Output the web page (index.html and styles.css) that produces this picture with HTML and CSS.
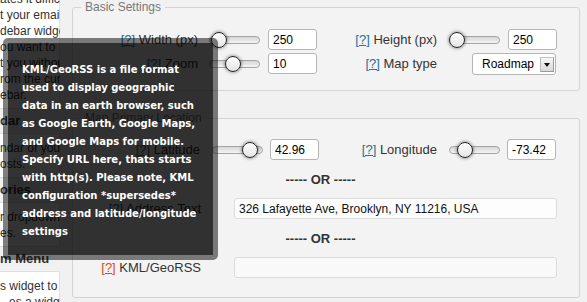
FILE: index.html
```html
<!DOCTYPE html>
<html>
<head>
    <link rel="stylesheet" href="styles.css">
</head>
<body>
    <div class="page">
        <div class="sidebar">
            <div class="widget-desc first">
                <p>ates it difficult to</p>
                <p>t your email</p>
                <p>debar widgets</p>
                <p>ou want to</p>
                <p>t you without</p>
                <p>rom the current</p>
                <p>ebar.</p>
            </div>
            <div class="widget-title">dar</div>
            <div class="widget-desc">
                <p>ndar of your</p>
                <p>osts.</p>
            </div>
            <div class="widget-title">ories</div>
            <div class="widget-desc">
                <p>r dropdown of</p>
                <p>es.</p>
            </div>
            <div class="widget-title">m Menu</div>
            <div class="widget-desc">
                <p>s widget to</p>
                <p class="indent">es a widget</p>
            </div>
        </div>

        <div class="main">
            <fieldset class="box basic">
                <legend>Basic Settings</legend>
                <div class="row">
                    <label class="lbl"><a href="#" class="help">[?]</a> Width (px)</label>
                    <div class="slider"><span class="knob" style="left: 1px"></span></div>
                    <input type="text" class="num" value="250">
                    <label class="lbl lbl-2"><a href="#" class="help">[?]</a> Height (px)</label>
                    <div class="slider"><span class="knob" style="left: -1px"></span></div>
                    <input type="text" class="num" value="250">
                </div>
                <div class="row">
                    <label class="lbl"><a href="#" class="help">[?]</a> Zoom</label>
                    <div class="slider"><span class="knob" style="left: 15px"></span></div>
                    <input type="text" class="num" value="10">
                    <label class="lbl lbl-2"><a href="#" class="help">[?]</a> Map type</label>
                    <div class="select-wrap">
                        <select class="maptype">
                            <option>Roadmap</option>
                            <option>Satellite</option>
                            <option>Hybrid</option>
                            <option>Terrain</option>
                        </select>
                        <span class="select-arrow"></span>
                    </div>
                </div>
            </fieldset>

            <fieldset class="box location">
                <legend>Map Primary Location</legend>
                <div class="row">
                    <label class="lbl"><a href="#" class="help">[?]</a> Latitude</label>
                    <div class="slider"><span class="knob" style="left: 29px"></span></div>
                    <input type="text" class="num" value="42.96">
                    <label class="lbl lbl-2"><a href="#" class="help">[?]</a> Longitude</label>
                    <div class="slider"><span class="knob" style="left: 7px"></span></div>
                    <input type="text" class="num" value="-73.42">
                </div>
                <div class="or">----- OR -----</div>
                <div class="row">
                    <label class="lbl wide"><a href="#" class="help">[?]</a> Address Text</label>
                    <input type="text" class="long" value="326 Lafayette Ave, Brooklyn, NY 11216, USA">
                </div>
                <div class="or">----- OR -----</div>
                <div class="row">
                    <label class="lbl wide"><a href="#" class="help active">[?]</a> KML/GeoRSS</label>
                    <input type="text" class="long empty" value="">
                </div>
            </fieldset>
        </div>

        <div class="tooltip">
            KML/GeoRSS is a file format<br>
            used to display geographic<br>
            data in an earth browser, such<br>
            as Google Earth, Google Maps,<br>
            and Google Maps for mobile.<br>
            Specify URL here, thats starts<br>
            with http(s). Please note, KML<br>
            configuration *supersedes*<br>
            address and latitude/longitude<br>
            settings
        </div>
    </div>
</body>
</html>
```

FILE: styles.css
```css
body {
    margin: 0;
    background: #f1f1f1;
    font-family: "Liberation Sans", Arial, sans-serif;
    color: #333;
}
.page {
    position: relative;
    display: flex;
    height: 302px;
    overflow: hidden;
}

/* widget list on the left, scrolled off screen */
.sidebar {
    width: 60px;
    flex-shrink: 0;
    overflow: hidden;
    font-size: 12px;
}
.widget-desc {
    background: #fff;
    border: 1px solid #dfdfdf;
    border-left: none;
    padding: 6px 0 5px;
}
.widget-desc.first {
    margin-top: -12px;
    padding-top: 2px;
}
.widget-desc p {
    margin: 0;
    line-height: 16px;
    white-space: nowrap;
}
.widget-desc p.indent {
    padding-left: 9px;
}
.widget-title {
    height: 24px;
    line-height: 24px;
    font-weight: bold;
    font-size: 13px;
    white-space: nowrap;
}

/* settings */
.main {
    flex: 1;
    padding: 0 7px 0 12px;
}
.box {
    margin: 0;
    padding: 15px 0 16px;
    border: 1px solid #d4d4d4;
    border-radius: 3px;
    background: #f3f3f3;
    min-width: 0;
}
.box legend {
    margin-left: 8px;
    padding: 0 4px;
    font-size: 12px;
    line-height: 14px;
    color: #777;
}
.location {
    margin-top: 20px;
    padding: 14px 0 19px;
}
.row {
    display: flex;
    align-items: center;
    height: 21px;
}
.row + .row {
    margin-top: 3px;
}
.lbl {
    width: 125px;
    flex-shrink: 0;
    text-align: right;
    font-size: 13px;
    white-space: nowrap;
}
.lbl-2 {
    width: 120px;
}
.location .lbl {
    width: 127px;
}
.location .lbl-2 {
    width: 118px;
}
.location .lbl.wide {
    width: 128px;
}
.help {
    color: #21759b;
}
.help.active {
    color: #d54e21;
}

.slider {
    position: relative;
    width: 51px;
    height: 8px;
    margin-left: 11px;
    box-sizing: border-box;
    border: 1px solid #a5a5a5;
    border-radius: 4px;
    background: linear-gradient(#d6d6d6, #f4f4f4);
}
.lbl-2 + .slider {
    margin-left: 12px;
}
.location .slider {
    margin-left: 12px;
}
.knob {
    position: absolute;
    top: -5px;
    width: 16px;
    height: 16px;
    box-sizing: border-box;
    border: 1px solid #1e1e1e;
    border-radius: 50%;
    background: linear-gradient(#ffffff, #e4e4e4);
    box-shadow: 0 0 3px 1px rgba(0,0,0,0.35);
}

input[type="text"] {
    height: 21px;
    box-sizing: border-box;
    padding: 0 4px;
    border: 1px solid #b5b5b5;
    border-radius: 3px;
    background: #fff;
    font-family: "Liberation Sans", Arial, sans-serif;
    font-size: 12px;
    color: #000;
    outline: none;
}
.num {
    width: 49px;
    margin-left: 8px;
}
.location .num {
    margin-left: 7px;
}
.long {
    width: 323px;
    margin-left: 33px;
}
input.long {
    border-color: #dcdcdc;
    background: #fdfdfd;
    color: #111;
}
input.long.empty {
    background: #f9f9f9;
}

.select-wrap {
    position: relative;
    margin-left: 35px;
}
.maptype {
    -webkit-appearance: none;
    appearance: none;
    display: block;
    width: 84px;
    height: 22px;
    padding: 0 0 0 9px;
    border: 1px solid #b5b5b5;
    border-radius: 3px;
    background: #fff;
    font-family: "Liberation Sans", Arial, sans-serif;
    font-size: 12px;
    color: #000;
    outline: none;
}
.select-arrow {
    position: absolute;
    top: 4px;
    right: 2px;
    width: 14px;
    height: 15px;
    box-sizing: border-box;
    border: 1px solid #9a9a9a;
    border-top-color: #c4c4c4;
    border-left-color: #b8b8b8;
    background: linear-gradient(#f7f7f7, #d9d9d9);
    pointer-events: none;
}
.select-arrow::after {
    content: "";
    position: absolute;
    left: 3px;
    top: 5px;
    border-left: 3px solid transparent;
    border-right: 3px solid transparent;
    border-top: 4px solid #111;
}

.or {
    padding: 11px 11px 9px 0;
    line-height: 18px;
    text-align: center;
    font-size: 13px;
    font-weight: bold;
    color: #333;
}

/* help popup */
.tooltip {
    position: absolute;
    left: 3px;
    top: 38px;
    width: 215px;
    box-sizing: border-box;
    padding: 18px 8px 14px 14px;
    border: 5px solid rgba(0,0,0,0.5);
    border-radius: 5px;
    background: rgba(0,0,0,0.8);
    background-clip: padding-box;
    color: #fff;
    font-family: "DejaVu Sans", Verdana, sans-serif;
    font-size: 10px;
    font-weight: bold;
    line-height: 18px;
    white-space: nowrap;
}
```
